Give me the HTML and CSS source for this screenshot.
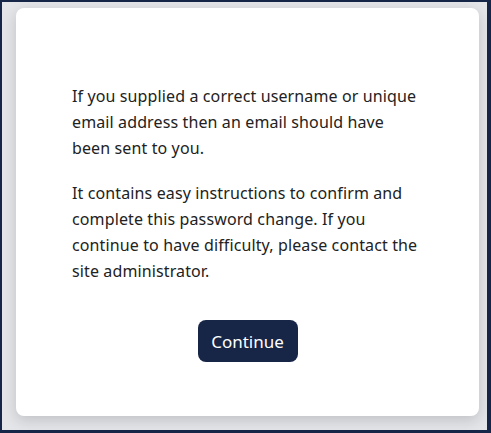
FILE: index.html
```html
<!DOCTYPE html>
<html lang="en">
<head>
<meta charset="utf-8">
<title>Password reset</title>
<link rel="stylesheet" href="styles.css">
</head>
<body>
<div class="frame">
  <main class="card">
    <p class="msg">If you supplied a correct username or unique email address then an email should have been sent to you.</p>
    <p class="msg">It contains easy instructions to confirm and complete this password change. If you continue to have difficulty, please contact the site administrator.</p>
    <div class="actions">
      <button class="btn" type="button">Continue</button>
    </div>
  </main>
</div>
</body>
</html>
```
FILE: styles.css
```css
html, body {
  margin: 0;
  padding: 0;
  height: 100%;
}
body {
  background: #152649;
  font-family: "Noto Sans", "Open Sans", sans-serif;
}
.frame {
  box-sizing: border-box;
  height: 433px;
  width: 491px;
  border-style: solid;
  border-color: #152649;
  border-width: 2px 4px 3px 2px;
  background: #e4e5e9;
  padding: 6px 8px 14px 14px;
  display: flex;
}
.card {
  flex: 1;
  background: #ffffff;
  border-radius: 8px;
  box-shadow: 0 4px 14px rgba(0, 0, 0, 0.16);
  padding: 75px 60px 0 56px;
}
.msg {
  margin: 0 0 19px 0;
  font-size: 16px;
  letter-spacing: 0.12px;
  line-height: 26px;
  color: #222222;
}
.actions {
  display: flex;
  justify-content: center;
  margin-top: 36px;
  margin-right: -4px;
}
.btn {
  width: 100px;
  height: 42px;
  border: none;
  border-radius: 8px;
  background: #172546;
  color: #ffffff;
  font-family: "Noto Sans", "Open Sans", sans-serif;
  font-size: 17px;
  cursor: pointer;
}
```
